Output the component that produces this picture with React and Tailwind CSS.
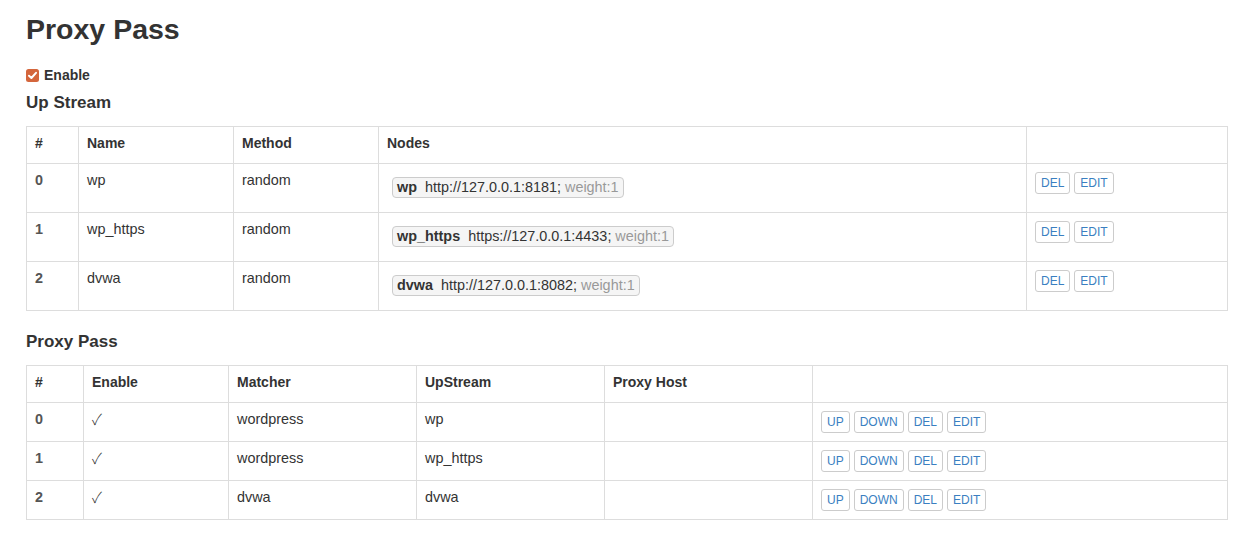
import React from 'react';

const upstreams = [
  { id: 0, name: 'wp', method: 'random', url: 'http://127.0.0.1:8181;' },
  { id: 1, name: 'wp_https', method: 'random', url: 'https://127.0.0.1:4433;' },
  { id: 2, name: 'dvwa', method: 'random', url: 'http://127.0.0.1:8082;' },
];

const passes = [
  { id: 0, matcher: 'wordpress', upstream: 'wp' },
  { id: 1, matcher: 'wordpress', upstream: 'wp_https' },
  { id: 2, matcher: 'dvwa', upstream: 'dvwa' },
];

function Btn({ children }) {
  return (
    <button className="inline-block h-[22px] px-[5px] mr-[4px] border border-[#ccc] rounded-[3px] bg-white text-[12px] leading-[20px] text-[#3a7fc1] align-top">
      {children}
    </button>
  );
}

function Checkbox() {
  return (
    <svg width="13" height="13" viewBox="0 0 13 13" className="shrink-0">
      <rect x="0" y="0" width="13" height="13" rx="2.5" fill="#d4663c" />
      <path d="M3 6.8 L5.4 9 L10 3.8" fill="none" stroke="#fff" strokeWidth="2" strokeLinecap="round" strokeLinejoin="round" />
    </svg>
  );
}

const th = 'border border-[#ddd] px-2 pt-[6px] pb-[10px] text-left font-bold align-top';
const td = 'border border-[#ddd] px-2 pt-[6px] pb-[10px] align-top text-[14.4px]';
const tdBtn = 'border border-[#ddd] px-2 py-2 align-top';

function App() {
  return (
    <div className="min-h-screen bg-white text-[#333] text-[14px] leading-[20px] font-['Liberation_Sans',Arial,sans-serif]">
      <div className="ml-[26px] w-[1202px] pt-[12px]">
        <h1 className="text-[28.5px] leading-[34px] font-bold">Proxy Pass</h1>

        <div className="flex items-center gap-[5px] mt-[19px] font-bold">
          <Checkbox />
          <span>Enable</span>
        </div>

        <h4 className="text-[17px] leading-[20px] font-bold mt-[8px] mb-[13px]">Up Stream</h4>

        <table className="w-full table-fixed border-collapse">
          <colgroup>
            <col className="w-[52px]" />
            <col className="w-[155px]" />
            <col className="w-[145px]" />
            <col className="w-[648px]" />
            <col />
          </colgroup>
          <thead>
            <tr>
              <th className={th}>#</th>
              <th className={th}>Name</th>
              <th className={th}>Method</th>
              <th className={th}>Nodes</th>
              <th className={th}></th>
            </tr>
          </thead>
          <tbody>
            {upstreams.map((u) => (
              <tr key={u.id}>
                <td className={td + ' font-bold text-[#555]'}>{u.id}</td>
                <td className={td}>{u.name}</td>
                <td className={td}>{u.method}</td>
                <td className={tdBtn + ' pt-[13px] pb-[14px] pl-[13px] text-[14.4px]'}>
                  <span className="inline-block h-[21px] px-[4px] border border-[#ccc] rounded-[4px] bg-[#f5f5f5] leading-[19px]">
                    <b className="mr-[8px]">{u.name}</b>
                    {u.url}
                    <span className="text-[#999]"> weight:1</span>
                  </span>
                </td>
                <td className={tdBtn}>
                  <Btn>DEL</Btn>
                  <Btn>EDIT</Btn>
                </td>
              </tr>
            ))}
          </tbody>
        </table>

        <h4 className="text-[17px] leading-[20px] font-bold mt-[21px] mb-[13px]">Proxy Pass</h4>

        <table className="w-full table-fixed border-collapse">
          <colgroup>
            <col className="w-[57px]" />
            <col className="w-[145px]" />
            <col className="w-[188px]" />
            <col className="w-[188px]" />
            <col className="w-[208px]" />
            <col />
          </colgroup>
          <thead>
            <tr>
              <th className={th}>#</th>
              <th className={th}>Enable</th>
              <th className={th}>Matcher</th>
              <th className={th}>UpStream</th>
              <th className={th}>Proxy Host</th>
              <th className={th}></th>
            </tr>
          </thead>
          <tbody>
            {passes.map((p) => (
              <tr key={p.id}>
                <td className={td + ' font-bold text-[#555]'}>{p.id}</td>
                <td className={td + " font-['Noto_Sans_CJK_SC',sans-serif] text-[15px] font-light"}>✓</td>
                <td className={td}>{p.matcher}</td>
                <td className={td}>{p.upstream}</td>
                <td className={td}></td>
                <td className={tdBtn + ' h-[39px]'}>
                  <Btn>UP</Btn>
                  <Btn>DOWN</Btn>
                  <Btn>DEL</Btn>
                  <Btn>EDIT</Btn>
                </td>
              </tr>
            ))}
          </tbody>
        </table>
      </div>
    </div>
  );
}

export default App;
